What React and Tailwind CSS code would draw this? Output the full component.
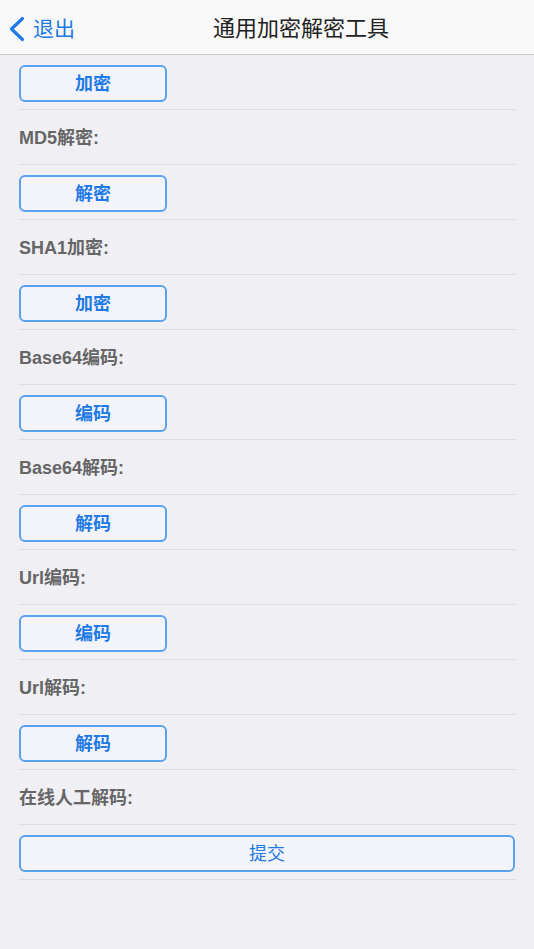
const ROWS = [
  { type: "button", text: "加密" },
  { type: "label", text: "MD5解密:" },
  { type: "button", text: "解密" },
  { type: "label", text: "SHA1加密:" },
  { type: "button", text: "加密" },
  { type: "label", text: "Base64编码:" },
  { type: "button", text: "编码" },
  { type: "label", text: "Base64解码:" },
  { type: "button", text: "解码" },
  { type: "label", text: "Url编码:" },
  { type: "button", text: "编码" },
  { type: "label", text: "Url解码:" },
  { type: "button", text: "解码" },
  { type: "label", text: "在线人工解码:" },
  { type: "wide", text: "提交" },
];

export default function App() {
  return (
    <div
      className="min-h-[949px] w-[534px] bg-[#efeff4]"
      style={{ fontFamily: '"Liberation Sans", "Noto Sans CJK SC", sans-serif' }}
    >
      {/* Nav bar */}
      <header className="flex h-[55px] items-center border-b border-[#c9c9cc] bg-[#f8f8f8] pt-[3px]">
        <button className="flex items-center pl-[8px] text-[#1f7ae6]">
          <svg width="17" height="26" viewBox="0 0 17 26" fill="none">
            <path d="M14.5 2.5 L3.5 13 L14.5 23.5" stroke="currentColor" strokeWidth="3.2" strokeLinecap="round" strokeLinejoin="round" />
          </svg>
          <span className="ml-[8px] text-[21px] leading-none">退出</span>
        </button>
        <h1 className="ml-[138px] text-[22px] font-normal leading-none text-[#222]">
          通用加密解密工具
        </h1>
      </header>

      <main className="px-[18px]">
        {ROWS.map((row, i) => (
          <div key={i} className="flex h-[55px] items-center border-b border-[#dedee3] pt-[2px]">
            {row.type === "label" && (
              <p className="pl-[1px] text-[18px] font-bold text-[#666]">{row.text}</p>
            )}
            {row.type === "button" && (
              <button className="ml-px flex h-[37px] w-[148px] items-center justify-center rounded-[6px] border-2 border-[#5aa2ee] bg-[#f3f4f9] pt-[2px] text-[18px] font-bold text-[#1f7ae6]">
                {row.text}
              </button>
            )}
            {row.type === "wide" && (
              <button className="ml-px flex h-[37px] w-[496px] items-center justify-center rounded-[6px] border-2 border-[#5aa2ee] bg-[#f3f4f9] pt-[2px] text-[18px] text-[#1f7ae6]">
                {row.text}
              </button>
            )}
          </div>
        ))}
      </main>
    </div>
  );
}
